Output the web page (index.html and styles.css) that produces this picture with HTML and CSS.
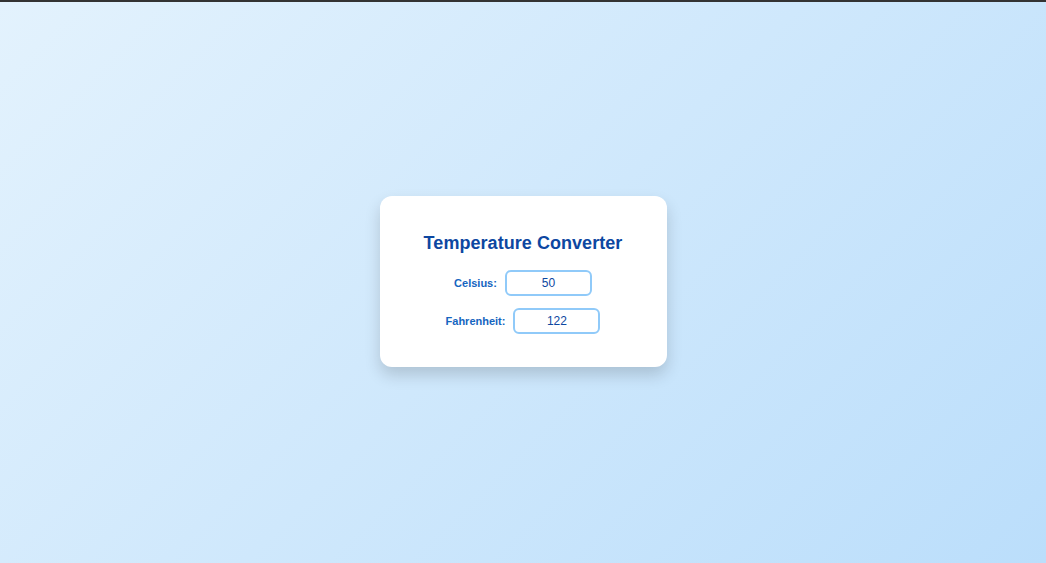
FILE: index.html
```html
<!DOCTYPE html>
<html lang="en">
<head>
<meta charset="utf-8">
<title>Temperature Converter</title>
<link rel="stylesheet" href="styles.css">
</head>
<body>
<main class="stage">
  <section class="card">
    <h1 class="title">Temperature Converter</h1>
    <div class="row">
      <label class="label" for="c">Celsius:</label>
      <input class="field" id="c" type="text" value="50">
    </div>
    <div class="row">
      <label class="label" for="f">Fahrenheit:</label>
      <input class="field" id="f" type="text" value="122">
    </div>
  </section>
</main>
</body>
</html>
```
FILE: styles.css
```css
html, body {
  margin: 0;
  padding: 0;
  height: 100%;
}
body {
  display: flex;
  flex-direction: column;
  font-family: "Liberation Sans", Arial, sans-serif;
  background:
    linear-gradient(#333, #333) top left / 100% 2px no-repeat,
    linear-gradient(135deg, #e3f2fd 0%, #bbdefb 100%);
}
.stage {
  flex: 1;
  display: flex;
  align-items: center;
  justify-content: center;
}
.card {
  width: 287px;
  box-sizing: border-box;
  background: #fff;
  border-radius: 12px;
  box-shadow: 0 8px 16px rgba(0, 0, 0, 0.16);
  padding: 36px 20px 33px;
  display: flex;
  flex-direction: column;
  align-items: center;
  gap: 12px;
}
.title {
  margin: 0 0 4px;
  font-size: 18px;
  font-weight: bold;
  letter-spacing: 0.05px;
  color: #0d47a1;
  line-height: 22px;
}
.row {
  display: flex;
  align-items: center;
  gap: 8px;
}
.label {
  font-size: 11px;
  font-weight: bold;
  color: #1565c0;
}
.field {
  width: 87px;
  height: 26px;
  box-sizing: border-box;
  border: 2px solid #90caf9;
  border-radius: 6px;
  text-align: center;
  font-family: "Liberation Sans", Arial, sans-serif;
  font-size: 12px;
  color: #0d47a1;
  background: #fff;
  outline: none;
  padding: 0 4px;
}
```
